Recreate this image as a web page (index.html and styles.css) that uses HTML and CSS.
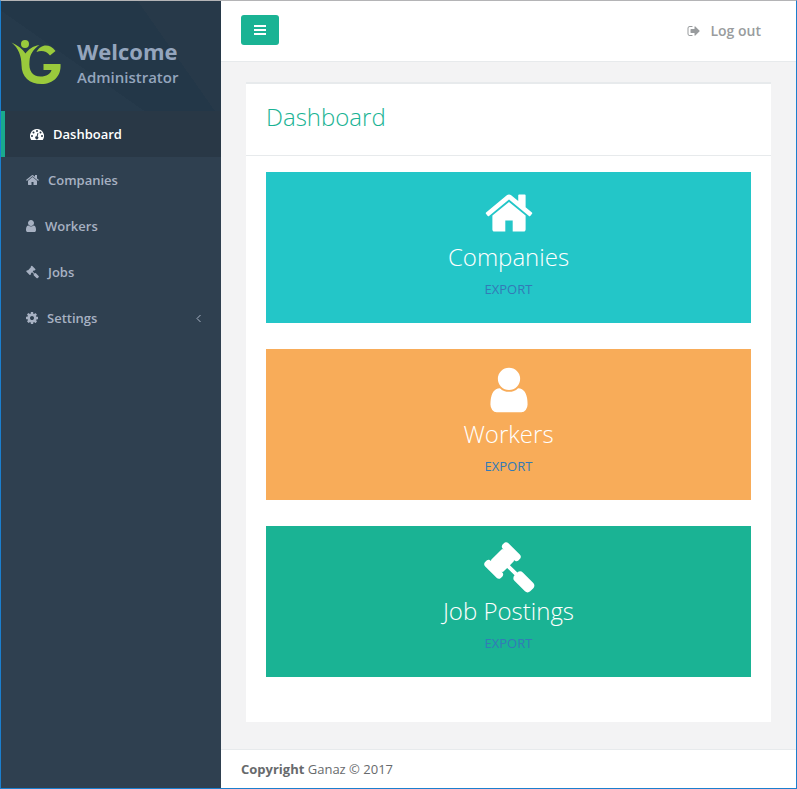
FILE: index.html
```html
<!DOCTYPE html>
<html lang="en">
<head>
<meta charset="utf-8">
<meta name="viewport" content="width=device-width, initial-scale=1">
<title>Ganaz Dashboard</title>
<link rel="stylesheet" href="styles.css">
</head>
<body>
<svg class="sprite" aria-hidden="true">
  <symbol id="home" viewBox="64 0 1664 1792"><path d="M1472 992v480q0 26-19 45t-45 19h-384v-384h-256v384h-384q-26 0-45-19t-19-45v-480q0-1 .5-3t.5-3l575-474 575 474q1 2 1 6zm223-69l-62 74q-8 9-21 11h-3q-13 0-21-7l-692-577-692 577q-12 8-24 7-13-2-21-11l-62-74q-8-10-7-23.500t11-21.500l719-599q32-26 76-26t76 26l244 204v-195q0-14 9-23t23-9h192q14 0 23 9t9 23v408l219 182q10 8 11 21.500t-7 23.500z"/></symbol>
  <symbol id="user" viewBox="256 0 1280 1792"><path d="M1536 1399q0 109-62.500 187t-150.500 78h-854q-88 0-150.500-78t-62.500-187q0-85 8.500-160.500t31.500-152 58.500-131 94-89 134.500-34.500q131 128 313 128t313-128q76 0 134.500 34.500t94 89 58.500 131 31.500 152 8.500 160.500zm-256-887q0 159-112.500 271.500t-271.500 112.500-271.500-112.500-112.500-271.500 112.500-271.500 271.500-112.500 271.500 112.500 112.500 271.500z"/></symbol>
  <symbol id="gavel" viewBox="0 0 1792 1792"><path d="M1771 1536q0 53-37 90l-107 108q-39 37-91 37-53 0-90-37l-363-364q-38-36-38-90 0-53 43-96l-256-256-126 126q-14 14-34 14t-34-14q2 2 12.500 12t12.500 13 10 11.500 10 13.500 6 13.500 5.500 16.500 1.500 18q0 38-28 68-3 3-16.500 18t-19 20.500-18.500 16.500-22 15.500-22 9-26 4.500q-40 0-68-28l-408-408q-28-28-28-68 0-13 4.500-26t9-22 15.500-22 16.500-18.500 20.500-19 18-16.500q30-28 68-28 10 0 18 1.500t16.500 5.500 13.500 6 13.500 10 11.500 10 13 12.500 12 12.500q-14-14-14-34t14-34l348-348q14-14 34-14t34 14q-2-2-12.500-12t-12.500-13-10-11.500-10-13.500-6-13.500-5.500-16.500-1.500-18q0-38 28-68 3-3 16.500-18t19-20.500 18.500-16.500 22-15.500 22-9 26-4.500q40 0 68 28l408 408q28 28 28 68 0 13-4.500 26t-9 22-15.500 22-16.500 18.500-20.500 19-18 16.500q-30 28-68 28-10 0-18-1.500t-16.500-5.500-13.500-6-13.500-10-11.500-10-13-12.500-12-12.500q14 14 14 34t-14 34l-126 126 256 256q43-43 96-43 52 0 91 37l363 363q37 39 37 91z"/></symbol>
  <symbol id="cog" viewBox="128 0 1536 1792"><path d="M1152 896q0-106-75-181t-181-75-181 75-75 181 75 181 181 75 181-75 75-181zm512-109v222q0 12-8 23t-20 13l-185 28q-19 54-39 91 35 50 107 138 10 12 10 25t-9 23q-27 37-99 108t-94 71q-12 0-26-9l-138-108q-44 23-91 38-16 136-29 186-7 28-36 28h-222q-14 0-24.500-8.500t-11.500-21.500l-28-184q-49-16-90-37l-141 107q-10 9-25 9-14 0-25-11-126-114-165-168-7-10-7-23 0-12 8-23 15-21 51-66.500t54-70.500q-27-50-41-99l-183-27q-13-2-21-12.500t-8-23.500v-222q0-12 8-23t19-13l186-28q14-46 39-92-40-57-107-138-10-12-10-24 0-10 9-23 26-36 98.500-107.500t94.500-71.500q13 0 26 10l138 107q44-23 91-38 16-136 29-186 7-28 36-28h222q14 0 24.500 8.500t11.500 21.500l28 184q49 16 90 37l142-107q9-9 24-9 13 0 25 10 129 119 165 170 7 8 7 22 0 12-8 23-15 21-51 66.500t-54 70.500q26 50 41 98l183 28q13 2 21 12.500t8 23.500z"/></symbol>
  <symbol id="gauge" viewBox="0 0 1792 1792"><path fill-rule="evenodd" d="M896 256A896 896 0 0 0 140 1634Q160 1664 195 1664H1597Q1632 1664 1652 1634A896 896 0 0 0 896 256ZM256 1024a128 128 0 1 0 0 256a128 128 0 1 0 0-256ZM448 576a128 128 0 1 0 0 256a128 128 0 1 0 0-256ZM896 384a128 128 0 1 0 0 256a128 128 0 1 0 0-256ZM1344 576a128 128 0 1 0 0 256a128 128 0 1 0 0-256ZM1536 1024a128 128 0 1 0 0 256a128 128 0 1 0 0-256ZM1025 765Q970 735 950 797L849 1179A194 194 0 1 0 974 1211L1075 829Q1080 785 1025 765Z"/></symbol>
  <symbol id="signout" viewBox="64 0 1664 1792"><path d="M704 1440q0 4 1 20t.5 26.500-3 23.500-10 19.500-20.500 6.500h-320q-119 0-203.500-84.500t-84.500-203.500v-704q0-119 84.500-203.500t203.500-84.500h320q13 0 22.500 9.500t9.500 22.500q0 4 1 20t.5 26.500-3 23.500-10 19.500-20.500 6.500h-320q-66 0-113 47t-47 113v704q0 66 47 113t113 47h312l11.500 1 11.500 3 8 5.500 7 9 2 13.500zm928-544q0 26-19 45l-544 544q-19 19-45 19t-45-19-19-45v-288h-448q-26 0-45-19t-19-45v-384q0-26 19-45t45-19h448v-288q0-26 19-45t45-19 45 19l544 544q19 19 19 45z"/></symbol>
</svg>
<div class="layout">
  <aside class="sidebar">
    <div class="profile">
      <svg class="logo" viewBox="0 0 50 46" role="img" aria-label="Ganaz">
        <circle cx="13.500" cy="4" r="4"/>
        <path d="M0 2.500C6 5 11 9 14 13.500C17 9.500 21 6 28 5C22 9 18.500 14 18 21C17 31 21 36.500 29 36.500C35 36.500 39 34 40 30H32V24H49C50 36 42 44 30 44C18 44 10 37 10 25C10 16 7 8 0 2.500Z"/>
        <path d="M25 12C29 4 38 3 44 11L38.500 15.500C35 11 30 10 25 12Z"/>
      </svg>
      <div>
        <strong class="welcome">Welcome</strong>
        <span class="role">Administrator</span>
      </div>
    </div>
    <nav class="menu">
      <a class="item active" href="#"><svg class="icon" width="14" height="14"><use href="#gauge"/></svg>Dashboard</a>
      <a class="item" href="#"><svg class="icon" width="13" height="14"><use href="#home"/></svg>Companies</a>
      <a class="item" href="#"><svg class="icon" width="10" height="14"><use href="#user"/></svg>Workers</a>
      <a class="item" href="#"><svg class="icon" width="13" height="14"><use href="#gavel"/></svg>Jobs</a>
      <a class="item" href="#"><svg class="icon" width="12" height="14"><use href="#cog"/></svg>Settings<svg class="chevron" width="5" height="9" viewBox="0 0 5 9"><path d="M4.500 1L1 4.500L4.500 8"/></svg></a>
    </nav>
  </aside>
  <div class="page">
    <header class="topbar">
      <button class="toggle" type="button" aria-label="Toggle menu"><svg width="12" height="10" viewBox="0 0 12 10"><path d="M0 0h12v2H0zM0 4h12v2H0zM0 8h12v2H0z"/></svg></button>
      <a class="logout" href="#"><svg class="icon" width="14" height="14"><use href="#signout"/></svg>Log out</a>
    </header>
    <main class="content">
      <section class="panel">
        <h1 class="title">Dashboard</h1>
        <div class="cards">
          <article class="card teal">
            <svg class="big" width="48" height="52"><use href="#home"/></svg>
            <h2>Companies</h2>
            <a href="#">EXPORT</a>
          </article>
          <article class="card orange">
            <svg class="big" width="38" height="52"><use href="#user"/></svg>
            <h2>Workers</h2>
            <a href="#">EXPORT</a>
          </article>
          <article class="card green">
            <svg class="big" width="52" height="52"><use href="#gavel"/></svg>
            <h2>Job Postings</h2>
            <a href="#">EXPORT</a>
          </article>
        </div>
      </section>
    </main>
    <footer class="footer"><strong>Copyright</strong> Ganaz © 2017</footer>
  </div>
</div>
</body>
</html>
```
FILE: styles.css
```css
* { box-sizing: border-box; }
body {
  margin: 0;
  font: 13px/20px "Open Sans", sans-serif;
  color: #676a6c;
  background: #f3f3f4;
}
a { text-decoration: none; }
svg { fill: currentColor; flex: none; }
.sprite { position: absolute; width: 0; height: 0; }
.layout {
  display: flex;
  min-height: 100vh;
  border: 1px solid #1b7fce;
  border-top-color: #b4b4b6;
}
.sidebar { width: 220px; flex: none; background: #2f4050; }
.profile {
  display: flex;
  align-items: center;
  gap: 15px;
  height: 110px;
  padding: 13px 10px 0;
  color: #94a5bd;
  background:
    linear-gradient(215deg, transparent 62%, #263a4b 62%),
    linear-gradient(55deg, #233748 0 72%, #273949 72%);
}
.logo { width: 51px; height: 46px; fill: #9aca3c; }
.welcome { display: block; font-size: 22px; line-height: 28px; font-weight: 700; }
.role { display: block; font-size: 15px; line-height: 24px; font-weight: 600; }
.item {
  display: flex;
  align-items: center;
  gap: 9px;
  height: 46px;
  padding: 0 20px 0 25px;
  font-weight: 600;
  color: #a7b1c2;
}
.item.active { color: #fff; background: #293846; border-left: 4px solid #19aa8d; }
.chevron { margin-left: auto; fill: none; stroke: currentColor; }
.page { flex: 1; min-width: 0; display: flex; flex-direction: column; }
.topbar {
  display: flex;
  align-items: flex-start;
  justify-content: space-between;
  height: 61px;
  padding: 14px 35px 0 20px;
  background: #fff;
  border-bottom: 1px solid #e7eaec;
}
.toggle {
  display: flex;
  align-items: center;
  justify-content: center;
  width: 38px;
  height: 30px;
  padding: 0;
  border: 0;
  border-radius: 3px;
  background: #1ab394;
  color: #fff;
}
.logout {
  display: flex;
  align-items: center;
  gap: 9px;
  height: 32px;
  font-size: 14px;
  font-weight: 600;
  color: #999c9e;
}
.content { flex: 1; padding: 20px 25px 27px; }
.panel { background: #fff; border-top: 2px solid #e7eaec; padding-bottom: 45px; }
.title {
  margin: 0;
  padding: 17px 20px 22px;
  border-bottom: 1px solid #e7eaec;
  font-size: 24px;
  line-height: 32px;
  font-weight: 300;
  color: #1ab394;
}
.cards { display: grid; gap: 26px; padding: 16px 20px 0; }
.card {
  display: flex;
  flex-direction: column;
  align-items: center;
  height: 151px;
  padding-top: 15px;
  color: #fff;
}
.card h2 { margin: 2px 0 6px; font-size: 24px; line-height: 32px; font-weight: 300; }
.card a { color: #337ab7; }
.teal { background: #23c6c8; }
.orange { background: #f8ac59; }
.green { background: #1ab394; }
.footer { padding: 9px 20px; background: #fff; border-top: 1px solid #e7eaec; }
```
